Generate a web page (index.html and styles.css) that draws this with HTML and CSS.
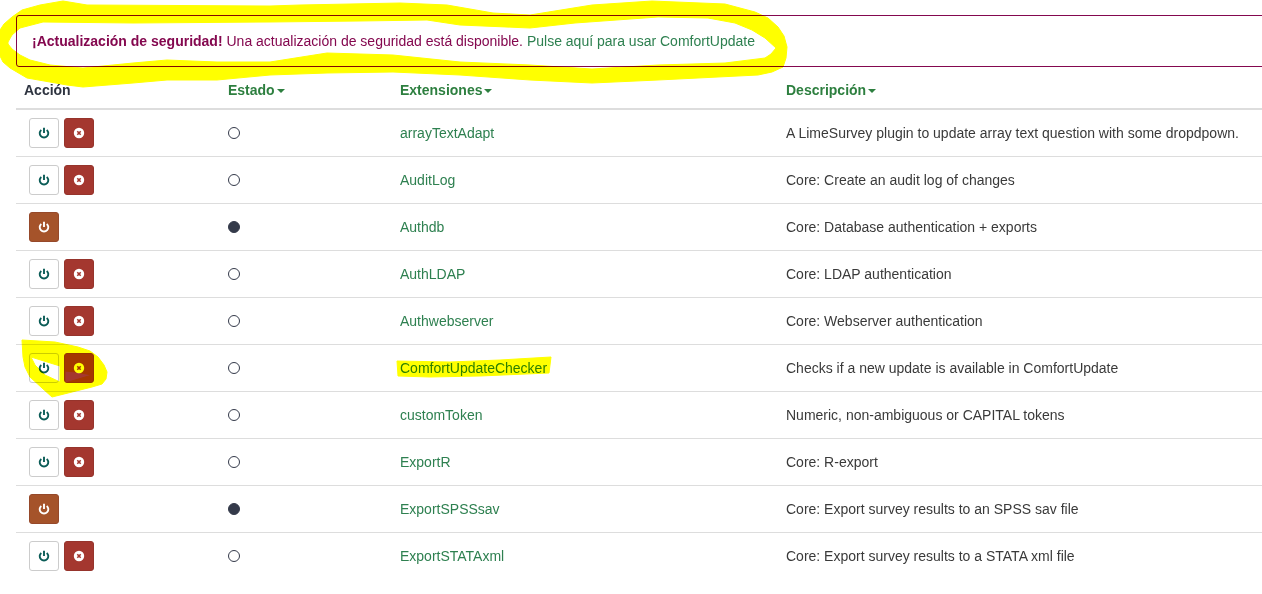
FILE: index.html
```html
<!DOCTYPE html>
<html lang="es">
<head>
<meta charset="utf-8">
<title>Extensiones</title>
<link rel="stylesheet" href="styles.css">
</head>
<body>
<svg width="0" height="0" class="defs">
  <symbol id="power" viewBox="0 0 12 12"><path d="M3.3 2.9A4.3 4.3 0 1 0 8.7 2.9" fill="none" stroke="currentColor" stroke-width="1.9"/><path d="M6 .8V6" stroke="currentColor" stroke-width="1.9"/></symbol>
  <symbol id="cross" viewBox="0 0 12 12"><circle cx="6" cy="6" r="5.2" fill="#fff"/><path d="M4.3 4.3 7.7 7.7M7.7 4.3 4.3 7.7" stroke="#a4372f" stroke-width="1.6"/></symbol>
</svg>
<main class="page">
  <div class="alert"><strong>¡Actualización de seguridad!</strong> Una actualización de seguridad está disponible. <a href="#">Pulse aquí para usar ComfortUpdate</a></div>
  <table class="plugins">
    <colgroup><col class="c1"><col class="c2"><col class="c3"><col class="c4"></colgroup>
    <thead>
      <tr><th>Acción</th><th class="sort">Estado<i class="caret"></i></th><th class="sort">Extensiones<i class="caret"></i></th><th class="sort">Descripción<i class="caret"></i></th></tr>
    </thead>
    <tbody>
      <tr><td><div class="acts"><button class="btn on"><svg class="ic"><use href="#power"/></svg></button><button class="btn del"><svg class="ic"><use href="#cross"/></svg></button></div></td><td><span class="dot"></span></td><td><a href="#">arrayTextAdapt</a></td><td>A LimeSurvey plugin to update array text question with some dropdpown.</td></tr>
      <tr><td><div class="acts"><button class="btn on"><svg class="ic"><use href="#power"/></svg></button><button class="btn del"><svg class="ic"><use href="#cross"/></svg></button></div></td><td><span class="dot"></span></td><td><a href="#">AuditLog</a></td><td>Core: Create an audit log of changes</td></tr>
      <tr><td><div class="acts"><button class="btn off"><svg class="ic"><use href="#power"/></svg></button></div></td><td><span class="dot full"></span></td><td><a href="#">Authdb</a></td><td>Core: Database authentication + exports</td></tr>
      <tr><td><div class="acts"><button class="btn on"><svg class="ic"><use href="#power"/></svg></button><button class="btn del"><svg class="ic"><use href="#cross"/></svg></button></div></td><td><span class="dot"></span></td><td><a href="#">AuthLDAP</a></td><td>Core: LDAP authentication</td></tr>
      <tr><td><div class="acts"><button class="btn on"><svg class="ic"><use href="#power"/></svg></button><button class="btn del"><svg class="ic"><use href="#cross"/></svg></button></div></td><td><span class="dot"></span></td><td><a href="#">Authwebserver</a></td><td>Core: Webserver authentication</td></tr>
      <tr><td><div class="acts"><button class="btn on"><svg class="ic"><use href="#power"/></svg></button><button class="btn del"><svg class="ic"><use href="#cross"/></svg></button></div></td><td><span class="dot"></span></td><td><a href="#">ComfortUpdateChecker</a></td><td>Checks if a new update is available in ComfortUpdate</td></tr>
      <tr><td><div class="acts"><button class="btn on"><svg class="ic"><use href="#power"/></svg></button><button class="btn del"><svg class="ic"><use href="#cross"/></svg></button></div></td><td><span class="dot"></span></td><td><a href="#">customToken</a></td><td>Numeric, non-ambiguous or CAPITAL tokens</td></tr>
      <tr><td><div class="acts"><button class="btn on"><svg class="ic"><use href="#power"/></svg></button><button class="btn del"><svg class="ic"><use href="#cross"/></svg></button></div></td><td><span class="dot"></span></td><td><a href="#">ExportR</a></td><td>Core: R-export</td></tr>
      <tr><td><div class="acts"><button class="btn off"><svg class="ic"><use href="#power"/></svg></button></div></td><td><span class="dot full"></span></td><td><a href="#">ExportSPSSsav</a></td><td>Core: Export survey results to an SPSS sav file</td></tr>
      <tr><td><div class="acts"><button class="btn on"><svg class="ic"><use href="#power"/></svg></button><button class="btn del"><svg class="ic"><use href="#cross"/></svg></button></div></td><td><span class="dot"></span></td><td><a href="#">ExportSTATAxml</a></td><td>Core: Export survey results to a STATA xml file</td></tr>
    </tbody>
  </table>
</main>
<svg class="marker" viewBox="0 0 1262 594" width="1262" height="594">
  <path fill-rule="evenodd" d="M0 30 4 24 12 17 22 10 40 5 63 1 87 5 270 6 300 5 400 3 447 5 493 13 530 15 592 5 652 1 725 4 755 12 768 18 778 27 784 36 787 47 786 58 783 67 772 72 758 75 658 80 592 83 530 80 460 75 393 72 327 73 270 75 217 80 167 80 133 83 83 87 67 85 27 78 10 68 3 62 0 56ZM8 42 12 35 20 28 43 22 133 23 270 22 360 21 427 20 460 25 530 28 575 23 658 17 708 18 735 23 752 30 765 38 776 48 771 54 765 58 725 63 658 65 592 69 530 65 460 62 393 55 327 53 270 62 217 62 167 60 133 63 83 68 50 65 30 60 20 55 12 49 8 44Z"/>
  <path fill-rule="evenodd" d="M22 340 55 342 78 347 90 351 98 357 104 365 107 372 106 379 102 384 92 387 72 392 52 397 42 388 30 377 25 367 23 357ZM31 357 60 366 60 382 45 375 35 365ZM65 371 75 372 92 375 65 383Z"/>
  <path d="M397 361 450 362 500 360 551 357 549 373 480 376 430 377 398 376Z"/>
</svg>
</body>
</html>
```
FILE: styles.css
```css
html, body { margin: 0; height: 100%; overflow: hidden; background: #fff; }
body { position: relative; font-family: "Liberation Sans", Arial, sans-serif; font-size: 14px; line-height: 20px; color: #3a3a3a; }
.defs { position: absolute; }
.page { width: 1290px; padding: 15px 0 0 16px; }
.alert { box-sizing: border-box; height: 52px; padding: 15px 15px; border: 1px solid #84084f; border-radius: 3px; color: #84084f; }
.alert a, .plugins a { color: #2e8050; text-decoration: none; }
.plugins { border-collapse: collapse; table-layout: fixed; width: 100%; margin-top: 13px; }
.c1 { width: 204px; } .c2 { width: 172px; } .c3 { width: 386px; }
.plugins th { height: 28px; padding: 0 8px; text-align: left; font-weight: 700; color: #2e3440; border-bottom: 2px solid #ddd; vertical-align: top; }
.plugins th.sort { color: #2d7f3f; }
.caret { display: inline-block; margin-left: 2px; vertical-align: middle; border-top: 4px solid #2d7f3f; border-left: 4px solid transparent; border-right: 4px solid transparent; }
.plugins td { padding: 8px; height: 30px; border-bottom: 1px solid #ddd; vertical-align: middle; }
.plugins tr:last-child td { border-bottom: 0; }
.acts { display: flex; gap: 5px; margin-left: 5px; }
.btn { width: 30px; height: 30px; padding: 0; display: flex; align-items: center; justify-content: center; border: 1px solid #ccc; border-radius: 3px; background: #fff; }
.btn.on { color: #0b5c57; }
.btn.del { background: #a4372f; border-color: #96342c; }
.btn.off { background: #a5532a; border-color: #96492a; color: #fff; }
.ic { width: 12px; height: 12px; display: block; }
.dot { display: block; box-sizing: border-box; width: 12px; height: 12px; border: 1px solid #343a4a; border-radius: 50%; background: #fff; }
.dot.full { background: #343a4a; }
.marker { position: absolute; left: 0; top: 0; fill: #ff0; stroke: #ff0; stroke-width: 1; stroke-linejoin: round; mix-blend-mode: multiply; pointer-events: none; }
```
